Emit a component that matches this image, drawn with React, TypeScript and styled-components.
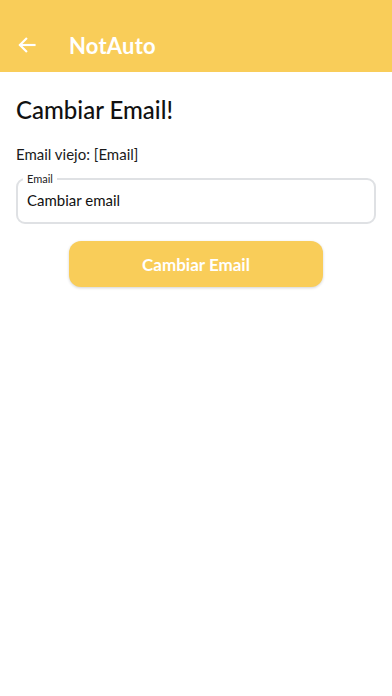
import React from 'react';
import styled, { createGlobalStyle } from 'styled-components';

const GlobalStyle = createGlobalStyle`
  html, body {
    margin: 0;
    padding: 0;
    background: #ffffff;
    font-family: "Lato", "Noto Sans", sans-serif;
  }
`;

const Screen = styled.div`
  width: 392px;
  min-height: 696px;
  background: #ffffff;
  display: flex;
  flex-direction: column;
`;

const Header = styled.header`
  height: 72px;
  background: #f9cd59;
  display: flex;
  align-items: center;
  padding: 18px 0 0 16px;
  box-sizing: border-box;
`;

const BackButton = styled.button`
  width: 22px;
  height: 22px;
  padding: 0;
  border: none;
  background: none;
  display: flex;
  align-items: center;
  justify-content: center;
  color: #ffffff;
`;

const HeaderTitle = styled.h1`
  margin: 0 0 0 31px;
  font-size: 22px;
  font-weight: 700;
  color: #ffffff;
  letter-spacing: 0.2px;
`;

const Content = styled.main`
  display: flex;
  flex-direction: column;
  padding: 24px 16px 0;
`;

const Title = styled.h2`
  margin: 0;
  font-size: 24px;
  font-weight: 500;
  color: #111111;
  line-height: 28px;
`;

const OldEmail = styled.p`
  margin: 20px 0 0;
  font-size: 15px;
  color: #1a1a1a;
  line-height: 20px;
`;

const Field = styled.label`
  position: relative;
  display: flex;
  align-items: center;
  margin-top: 14px;
  height: 46px;
  padding: 0 9px;
  border: 2px solid #dfe1e4;
  border-radius: 9px;
  box-sizing: border-box;
`;

const FieldLabel = styled.span`
  position: absolute;
  top: -8px;
  left: 5px;
  padding: 0 4px;
  background: #ffffff;
  font-size: 11px;
  line-height: 13px;
  color: #222222;
`;

const FieldInput = styled.input`
  border: none;
  outline: none;
  width: 100%;
  font-family: inherit;
  font-size: 15px;
  color: #111111;
  padding: 0;
  margin-top: -3px;
  background: transparent;
`;

const Submit = styled.button`
  align-self: center;
  margin-top: 17px;
  width: 254px;
  height: 46px;
  border: none;
  border-radius: 12px;
  background: #f9cd59;
  box-shadow: 0 1px 3px rgba(0, 0, 0, 0.18);
  font-family: inherit;
  font-size: 17px;
  font-weight: 700;
  color: #ffffff;
`;

export default function App() {
  return (
    <>
      <GlobalStyle />
      <Screen>
        <Header>
          <BackButton aria-label="Volver">
            <svg width="20" height="20" viewBox="0 0 24 24" fill="none" stroke="#fff" strokeWidth="2.6" strokeLinecap="square">
              <path d="M21 12H4" />
              <path d="M11 4.5L3.5 12L11 19.5" />
            </svg>
          </BackButton>
          <HeaderTitle>NotAuto</HeaderTitle>
        </Header>
        <Content>
          <Title>Cambiar Email!</Title>
          <OldEmail>Email viejo: [Email]</OldEmail>
          <Field>
            <FieldLabel>Email</FieldLabel>
            <FieldInput defaultValue="Cambiar email" />
          </Field>
          <Submit>Cambiar Email</Submit>
        </Content>
      </Screen>
    </>
  );
}
